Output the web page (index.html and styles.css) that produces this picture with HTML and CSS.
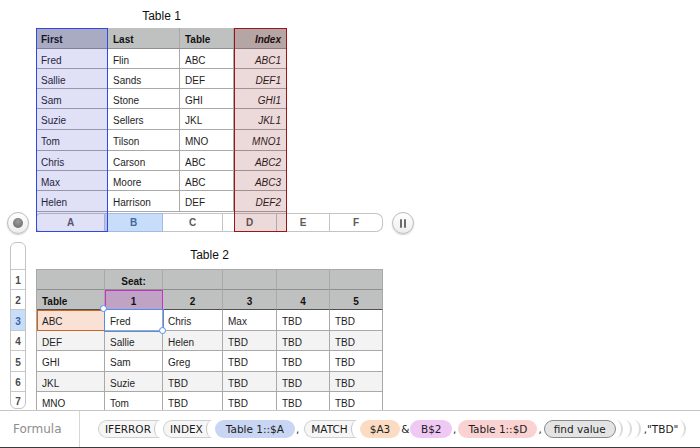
FILE: index.html
```html
<!DOCTYPE html>
<html>
<head>
<meta charset="utf-8">
<link rel="stylesheet" href="styles.css">
</head>
<body>
<div class="sheet">
  <div class="t1-section">
    <div class="radio-slot"><div class="radio"><div class="radio-dot"></div></div></div>
    <div class="t1">
      <div class="title">Table 1</div>
      <div class="grid1">
        <div class="c h">First</div><div class="c h">Last</div><div class="c h">Table</div><div class="c h r i">Index</div>
        <div class="c">Fred</div><div class="c">Flin</div><div class="c">ABC</div><div class="c r i">ABC1</div>
        <div class="c">Sallie</div><div class="c">Sands</div><div class="c">DEF</div><div class="c r i">DEF1</div>
        <div class="c">Sam</div><div class="c">Stone</div><div class="c">GHI</div><div class="c r i">GHI1</div>
        <div class="c">Suzie</div><div class="c">Sellers</div><div class="c">JKL</div><div class="c r i">JKL1</div>
        <div class="c">Tom</div><div class="c">Tilson</div><div class="c">MNO</div><div class="c r i">MNO1</div>
        <div class="c">Chris</div><div class="c">Carson</div><div class="c">ABC</div><div class="c r i">ABC2</div>
        <div class="c">Max</div><div class="c">Moore</div><div class="c">ABC</div><div class="c r i">ABC3</div>
        <div class="c">Helen</div><div class="c">Harrison</div><div class="c">DEF</div><div class="c r i">DEF2</div>
      </div>
      <div class="colbar">
        <div class="cb">A</div><div class="cb sel">B</div><div class="cb">C</div><div class="cb">D</div><div class="cb">E</div><div class="cb">F</div>
      </div>
      <div class="sel-box sel-a"></div>
      <div class="sel-box sel-d"></div>
    </div>
    <div class="pause-slot"><div class="pause"><span class="pbar"></span><span class="pbar"></span></div></div>
  </div>

  <div class="t2-section">
    <div class="rl">
      <div class="rlc"></div>
      <div class="rlc">1</div>
      <div class="rlc">2</div>
      <div class="rlc sel">3</div>
      <div class="rlc">4</div>
      <div class="rlc">5</div>
      <div class="rlc">6</div>
      <div class="rlc">7</div>
    </div>
    <div class="t2">
      <div class="title title2">Table 2</div>
      <div class="grid2">
        <div class="c h"></div><div class="c h ctr">Seat:</div><div class="c h"></div><div class="c h"></div><div class="c h"></div><div class="c h"></div>
        <div class="c h hb">Table</div><div class="c h hb ctr pick">1</div><div class="c h hb ctr">2</div><div class="c h hb ctr">3</div><div class="c h hb ctr">4</div><div class="c h hb ctr">5</div>
        <div class="c key">ABC</div><div class="c cur">Fred<span class="handle tl"></span><span class="handle br"></span></div><div class="c">Chris</div><div class="c">Max</div><div class="c">TBD</div><div class="c">TBD</div>
        <div class="c alt">DEF</div><div class="c alt">Sallie</div><div class="c alt">Helen</div><div class="c alt">TBD</div><div class="c alt">TBD</div><div class="c alt">TBD</div>
        <div class="c">GHI</div><div class="c">Sam</div><div class="c">Greg</div><div class="c">TBD</div><div class="c">TBD</div><div class="c">TBD</div>
        <div class="c alt">JKL</div><div class="c alt">Suzie</div><div class="c alt">TBD</div><div class="c alt">TBD</div><div class="c alt">TBD</div><div class="c alt">TBD</div>
        <div class="c">MNO</div><div class="c">Tom</div><div class="c">TBD</div><div class="c">TBD</div><div class="c">TBD</div><div class="c">TBD</div>
      </div>
    </div>
  </div>
</div>

<div class="fbar">
  <div class="flabel">Formula</div>
  <div class="tokens">
    <span class="fn">IFERROR</span>
    <span class="fn">INDEX</span>
    <span class="ref ref-a">Table 1::$A</span>
    <span class="sep wide">,</span>
    <span class="fn">MATCH</span>
    <span class="ref ref-a3">$A3</span>
    <span class="amp">&amp;</span>
    <span class="ref ref-b2">B$2</span>
    <span class="sep">,</span>
    <span class="ref ref-d">Table 1::$D</span>
    <span class="sep">,</span>
    <span class="arg">find value</span>
    <span class="close"></span><span class="close"></span><span class="close"></span>
    <span class="lit">,"TBD"</span>
    <span class="close"></span>
  </div>
</div>
</body>
</html>
```

FILE: styles.css
```css
* { box-sizing: border-box; }
html, body { margin: 0; padding: 0; }
body {
  width: 700px;
  height: 448px;
  overflow: hidden;
  background: #fff;
  font-family: "Liberation Sans", Arial, sans-serif;
  color: #1e1e1e;
  display: flex;
  flex-direction: column;
}
.sheet { height: 410px; flex: none; overflow: hidden; }

/* ---------- Table 1 ---------- */
.t1-section { display: flex; align-items: flex-end; }
.radio-slot { width: 36px; padding-left: 7px; margin-bottom: -2px; display: flex; }
.radio, .pause {
  width: 22px; height: 22px; border-radius: 50%;
  border: 1px solid #bcbcbc;
  background: linear-gradient(#ffffff, #ededed);
  box-shadow: 0 1px 1.5px rgba(0,0,0,0.18);
  display: flex; align-items: center; justify-content: center;
}
.radio-dot {
  width: 10px; height: 10px; border-radius: 50%;
  background: radial-gradient(circle at 50% 35%, #9c9c9c, #646464);
}
.pause-slot { margin-left: 9px; margin-bottom: -2px; display: flex; }
.pause { gap: 2px; }
.pbar { width: 2px; height: 9px; background: #6c6c6c; border-radius: 1px; }

.t1 { position: relative; width: 347px; display: flex; flex-direction: column; }
.title {
  width: 251px; height: 28px; padding-top: 9px;
  line-height: 14px; font-size: 12px; text-align: center; color: #111;
}
.title2 { width: 347px; height: 37px; padding-top: 16px; }

.grid1 {
  display: grid;
  grid-template-columns: 72px 72px 54px 53px;
  grid-template-rows: 21px 20px 20px 20px 21px 21px 20px 20px 21px;
  width: 251px;
}
.c {
  border-right: 1px solid #a9a9a9;
  border-bottom: 1px solid #a9a9a9;
  font-size: 10px;
  padding: 3px 5px 0;
  display: flex; align-items: center;
  white-space: nowrap;
  color: #1e1e1e;
}
.h { background: #bfc1c1; font-weight: bold; color: #111; border-bottom-color: #8f8f8f; }
.hb { border-bottom-color: #505050; }
.r { justify-content: flex-end; }
.i { font-style: italic; }
.ctr { justify-content: center; }

.colbar {
  display: grid;
  grid-template-columns: 69px 58px 60px 54px 53px 53px;
  height: 19px; margin-top: 1px;
}
.cb {
  border: 1px solid #c4c4c4; border-left: none;
  display: flex; align-items: center; justify-content: center;
  font-size: 10px; font-weight: bold; color: #5b5b5b; background: #fff;
}
.cb:first-child { border-left: 1px solid #c4c4c4; border-radius: 4px 0 0 4px; }
.cb:last-child { border-radius: 0 7px 7px 0; }
.cb.sel { background: #c7ddf9; color: #43689e; border-color: #a0bce3; }

.sel-box { position: absolute; top: 28px; height: 204px; }
.sel-a { left: 0; width: 72px; border: 1px solid #3149e4; background: rgba(48, 48, 200, 0.15); }
.sel-d { left: 198px; width: 53px; border: 1px solid #9a1515; background: rgba(128, 8, 8, 0.15); }

/* ---------- Table 2 ---------- */
.t2-section { display: flex; align-items: flex-start; }
.rl {
  margin: 10px 0 0 10px; width: 16px;
  border: 1px solid #c4c4c4; border-radius: 6px;
  display: grid;
  grid-template-rows: 27px 20px 20px 21px 20px 21px 20px 16px;
  overflow: hidden; background: #fff;
}
.rlc {
  border-bottom: 1px solid #c8c8c8;
  font-size: 10px; font-weight: bold; color: #4a4a4a;
  display: flex; align-items: center; justify-content: center;
  padding-top: 2px;
}
.rlc:last-child { border-bottom: none; }
.rlc.sel { background: #c7ddf9; color: #3d64a0; }

.t2 { margin-left: 10px; }
.grid2 {
  display: grid;
  grid-template-columns: 68px 58px 60px 54px 53px 53px;
  grid-template-rows: 20px 20px 21px 20px 21px 20px 20px;
  border-top: 1px solid #a9a9a9; border-left: 1px solid #a9a9a9;
  width: 347px;
}
.alt { background: #f3f3f3; }
.pick { background: #c0a3c4; outline: 1px solid #c930c9; outline-offset: -1px; }
.key { background: #f9e1d5; outline: 1px solid #d0641e; outline-offset: -1px; }
.cur { position: relative; background: #fff; outline: 1px solid #4d8ef0; }
.handle {
  position: absolute; width: 7px; height: 7px; border-radius: 50%;
  background: #fff; border: 1px solid #4d8ef0;
}
.handle.tl { left: -5px; top: -5px; }
.handle.br { right: -4px; bottom: -4px; }

/* ---------- Formula bar ---------- */
.fbar {
  height: 38px; flex: none;
  border-top: 1px solid #c6c6c6; border-bottom: 1px solid #3c3c3c;
  display: flex; align-items: center;
  font-family: "DejaVu Sans", sans-serif;
}
.flabel {
  width: 80px; align-self: stretch;
  border-right: 1px solid #d6d6d6;
  padding-left: 13px;
  display: flex; align-items: center;
  font-size: 12px; color: #8e8e8e;
}
.tokens { margin-left: 18px; display: flex; align-items: center; font-size: 10.5px; color: #1c1c1c; white-space: nowrap; }
.fn {
  position: relative; height: 18px; line-height: 16px;
  border: 1px solid #cfcfcf; border-right: none;
  border-radius: 9px 0 0 9px;
  background: #f6f6f6;
  padding: 0 10px 0 6px; margin-right: 2px;
}
.fn::after {
  content: ""; position: absolute; right: 0; top: -1px;
  width: 6px; height: 18px;
  border-left: 1px solid #c6c6c6;
  border-radius: 6px 0 0 6px / 9px 0 0 9px;
  background: #fff;
}
.ref { height: 18px; line-height: 18px; border-radius: 9px; padding: 0 11px; }
.ref-a { background: #c8d5f3; }
.ref-a3 { background: #fbdcc3; padding: 0 10px; }
.ref-b2 { background: #efc8f4; padding: 0 10.5px; }
.ref-d { background: #fbd2d2; padding: 0 10px; }
.sep { padding: 0 2px 0 1px; }
.sep.wide { padding-right: 5px; }
.amp { padding: 0 1px; }
.arg {
  height: 18px; line-height: 16px;
  border: 1px solid #8a8a8a; border-radius: 9px;
  background: #e4e4e4; padding: 0 9px;
}
.close {
  width: 7px; height: 18px;
  border-right: 2px solid #dadada;
  border-radius: 0 7px 7px 0 / 0 9px 9px 0;
  margin-right: 2px;
}
.lit { padding: 0 1px; }
```
